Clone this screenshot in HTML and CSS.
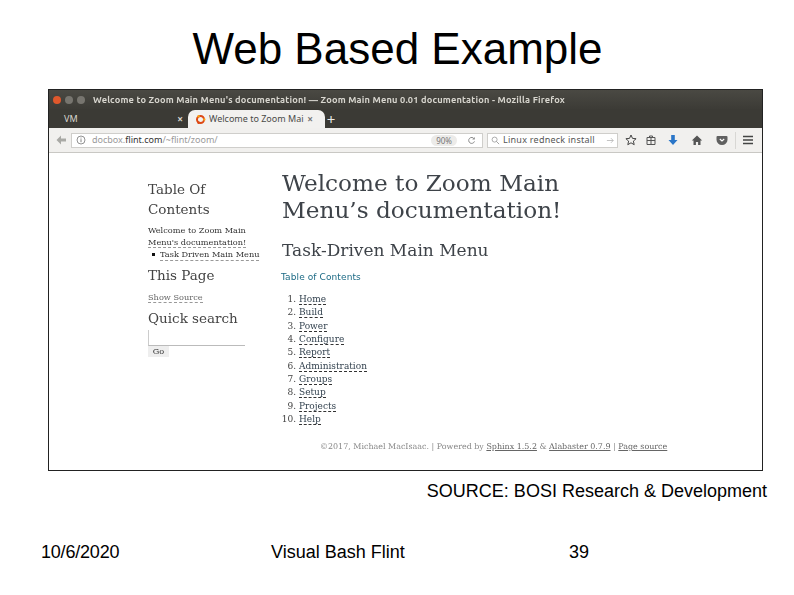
FILE: index.html
```html
<!DOCTYPE html>
<html lang="en">
<head>
<meta charset="utf-8">
<title>Web Based Example</title>
<link rel="stylesheet" href="styles.css">
</head>
<body>
<main class="slide">
  <h1 class="slide-title">Web Based Example</h1>
  <section class="shot">
    <div class="titlebar">
      <span class="dot dot-close"></span><span class="dot"></span><span class="dot"></span>
      <span class="win-title">Welcome to Zoom Main Menu's documentation! — Zoom Main Menu 0.01 documentation - Mozilla Firefox</span>
    </div>
    <div class="tabbar">
      <div class="tab-idle"><span>VM</span><span class="tab-x">×</span></div>
      <div class="tab-active">
        <svg class="favicon" viewBox="0 0 10 10"><circle cx="5" cy="5" r="3.2" fill="none" stroke="#dd4814" stroke-width="1.8"/><circle cx="8.4" cy="5" r="1.1" fill="#f7a11a"/><circle cx="3.2" cy="2" r="1.1" fill="#f7a11a"/><circle cx="3.2" cy="8" r="1.1" fill="#dd4814"/></svg>
        <span class="tab-label">Welcome to Zoom Mai</span><span class="tab-x tab-x-dark">×</span>
      </div>
      <span class="tab-new">+</span>
    </div>
    <div class="toolbar">
      <svg class="back" viewBox="0 0 12 12"><path d="M6 1.500 1.500 6 6 10.500V7.600h5V4.400H6z" fill="#a9a9a5"/></svg>
      <div class="urlbar">
        <svg class="info" viewBox="0 0 10 10"><circle cx="5" cy="5" r="4" fill="none" stroke="#777" stroke-width=".8"/><path d="M5 4.200v3M5 2.600v.9" stroke="#777" stroke-width=".9"/></svg>
        <span class="url"><span class="url-dim">docbox.</span><b>flint.com</b><span class="url-dim">/~flint/zoom/</span></span>
        <span class="zoom-pill">90%</span>
        <svg class="reload" viewBox="0 0 10 10"><path d="M8 3.200A3.300 3.300 0 1 0 8.300 6" fill="none" stroke="#8a8a8a" stroke-width="1.100"/><path d="M8.600 1v3H5.800z" fill="#8a8a8a"/></svg>
      </div>
      <div class="searchbar">
        <svg class="lens" viewBox="0 0 10 10"><circle cx="4" cy="4" r="2.800" fill="none" stroke="#999" stroke-width=".9"/><path d="m6 6 3 3" stroke="#999" stroke-width="1"/></svg>
        <span class="search-text">Linux redneck install</span>
        <svg class="go" viewBox="0 0 10 10"><path d="M1 5h7M5.500 2.400 8 5 5.500 7.600" fill="none" stroke="#b5b5b5" stroke-width=".9"/></svg>
      </div>
      <div class="tools">
        <svg class="tool-star" viewBox="0 0 12 12"><path d="m6 1 1.500 3.400 3.600.3-2.700 2.400.8 3.600L6 8.800l-3.200 1.900.8-3.600L.9 4.700l3.600-.3z" fill="none" stroke="#444" stroke-width="1"/></svg>
        <svg class="tool-box" viewBox="0 0 12 12"><path d="M2 3.500h8v7H2zM2 6.500h8M6 3.500v7M4.500 3.500V2h3v1.500" fill="none" stroke="#555" stroke-width="1"/></svg>
        <svg class="tool-down" viewBox="0 0 12 12"><path d="M4.200 1h3.600v5h2.700L6 11 1.500 6h2.700z" fill="#2a76c8"/></svg>
        <svg class="tool-home" viewBox="0 0 12 12"><path d="M6 1.500.8 6.500h1.700V11h2.400V8h2.200v3h2.400V6.500h1.700z" fill="#555"/></svg>
        <svg class="tool-pocket" viewBox="0 0 12 12"><path d="M1.500 2h9a1 1 0 0 1 1 1v2.800a5.500 5.200 0 0 1-11 0V3a1 1 0 0 1 1-1z" fill="#606060"/><path d="M3.800 5 6 7l2.200-2" fill="none" stroke="#fff" stroke-width="1.100"/></svg>
        <span class="tool-sep"></span>
        <svg viewBox="0 0 12 12"><path d="M1 2.500h10M1 6h10M1 9.500h10" stroke="#444" stroke-width="1.700"/></svg>
      </div>
    </div>
    <div class="page">
      <div class="doc">
        <aside class="sidebar">
          <h3 class="side-head side-toc">Table Of Contents</h3>
          <div class="side-first">Welcome to Zoom Main <a class="side-link">Menu's documentation!</a></div>
          <div class="side-sub"><span class="bullet"></span><a class="side-link">Task Driven Main Menu</a></div>
          <h3 class="side-head side-page">This Page</h3>
          <a class="side-link side-src">Show Source</a>
          <h3 class="side-head side-quick">Quick search</h3>
          <div class="search-input"></div>
          <span class="search-go">Go</span>
        </aside>
        <article class="body-col">
          <h1 class="doc-h1">Welcome to Zoom Main Menu’s documentation!</h1>
          <h2 class="doc-h2">Task-Driven Main Menu</h2>
          <p class="toc-label">Table of Contents</p>
          <ol class="toc">
            <li><a>Home</a></li>
            <li><a>Build</a></li>
            <li><a>Power</a></li>
            <li><a>Configure</a></li>
            <li><a>Report</a></li>
            <li><a>Administration</a></li>
            <li><a>Groups</a></li>
            <li><a>Setup</a></li>
            <li><a>Projects</a></li>
            <li><a>Help</a></li>
          </ol>
        </article>
      </div>
      <p class="doc-foot">©2017, Michael MacIsaac. | Powered by <u>Sphinx 1.5.2</u> &amp; <u>Alabaster 0.7.9</u> | <u>Page source</u></p>
    </div>
  </section>
  <p class="source">SOURCE: BOSI Research &amp; Development</p>
  <footer class="slide-foot">
    <span class="foot-date">10/6/2020</span>
    <span class="foot-mid">Visual Bash Flint</span>
    <span>39</span>
  </footer>
</main>
</body>
</html>
```
FILE: styles.css
```css
* { box-sizing: border-box; }
html, body { margin: 0; padding: 0; background: #fff; }
body { width: 794px; height: 595px; overflow: hidden; font-family: "Liberation Sans", Arial, sans-serif; color: #000; }
.slide { width: 794px; height: 595px; padding-top: 23px; }
.slide-title { margin: 0 0 0 1px; font-size: 44px; line-height: 52px; font-weight: 400; text-align: center; height: 66px; }

.shot { width: 715px; height: 382px; margin-left: 48px; border: 1px solid #222; display: flex; flex-direction: column; overflow: hidden; background: #fff; }
.titlebar { height: 19px; background: linear-gradient(#4a4943, #3c3b36); display: flex; align-items: center; padding-left: 4px; gap: 4px; color: #d8d6cf; }
.dot { width: 8px; height: 8px; border-radius: 50%; background: #77756f; }
.dot-close { background: #e0582c; }
.win-title { margin-left: 4px; font: 700 9.250px/12px "Ubuntu", "Noto Sans", sans-serif; white-space: nowrap; letter-spacing: .18px; filter: blur(.3px); }

.tabbar { height: 19px; background: #3b3a35; display: flex; align-items: flex-end; color: #d8d6cf; font: 400 9px/12px "Noto Sans", sans-serif; }
.tab-idle { width: 139px; height: 19px; display: flex; justify-content: space-between; align-items: center; padding: 0 5px 0 15px; }
.tab-x { font-size: 10px; font-weight: 700; }
.tab-active { width: 137px; height: 18px; background: #f2f1ef; border-radius: 7px 7px 0 0; color: #4a4a48; display: flex; align-items: center; padding: 0 12px 0 7px; }
.favicon { width: 11px; height: 11px; flex: none; margin-right: 3px; }
.tab-label { flex: 1; overflow: hidden; white-space: nowrap; font-size: 9px; }
.tab-x-dark { color: #777; }
.tab-new { margin: 0 0 0 -2px; font-size: 15px; line-height: 18px; color: #e8e8e4; width: 16px; text-align: center; }

.toolbar { height: 25px; background: #f1f0ee; border-bottom: 1px solid #c9c8c4; display: flex; align-items: center; padding: 0 8px 0 6px; }
.back { width: 12px; height: 12px; flex: none; margin-right: 4px; }
.urlbar { flex: none; width: 412px; height: 15px; background: #fff; border: 1px solid #cfcecb; display: flex; align-items: center; padding: 0 5px 0 4px; font: 400 9px/12px "Noto Sans", sans-serif; }
.info { width: 10px; height: 10px; flex: none; margin-right: 6px; }
.url { flex: 1; white-space: nowrap; color: #333; }
.url-dim { color: #999; }
.url b { font-weight: 400; }
.zoom-pill { background: #ecebe9; border-radius: 7px; padding: 0 5px; font-size: 8px; line-height: 11px; color: #777; margin-right: 10px; }
.reload { width: 9px; height: 9px; flex: none; margin-right: 1px; }
.searchbar { flex: none; width: 131px; height: 15px; margin-left: 4px; background: #fff; border: 1px solid #cfcecb; display: flex; align-items: center; padding: 0 2px 0 3px; font: 400 9px/12px "Noto Sans", sans-serif; color: #555; }
.lens { width: 9px; height: 9px; flex: none; margin-right: 3px; }
.search-text { flex: 1; white-space: nowrap; letter-spacing: .25px; }
.go { width: 9px; height: 9px; flex: none; }
.tools { flex: none; display: flex; align-items: center; margin-left: 7px; }
.tools svg { width: 12px; height: 12px; flex: none; }
.tools .tool-star { margin-right: 8px; }
.tools .tool-box { margin-right: 10px; }
.tools .tool-down { margin-right: 12px; }
.tools .tool-home { margin-right: 13px; }
.tools .tool-pocket { margin-right: 7px; }
.tool-sep { width: 1px; height: 17px; background: #d8d7d4; margin-right: 6px; }

.page { flex: 1; display: flex; flex-direction: column; filter: blur(.25px); }
.doc { display: flex; height: 288px; padding: 0 0 0 99px; }
.sidebar { width: 134px; padding-top: 26px; font-family: "DejaVu Serif", serif; color: #444; }
.side-head { margin: 0; font-size: 13.500px; font-weight: 400; line-height: 20px; color: #444; width: 100px; }
.side-link { font-size: 8.200px; line-height: 12px; color: #333; border-bottom: 1px dashed #999; }
.side-first { width: 104px; margin-top: 5px; font-size: 8.200px; line-height: 12px; color: #333; }
.side-sub { display: flex; align-items: center; height: 12px; white-space: nowrap; font-size: 8.200px; padding-left: 4px; }
.bullet { width: 3px; height: 3px; background: #111; margin-right: 5px; }
.side-page { margin-top: 5px; }
.side-src { display: inline-block; margin-top: 5px; line-height: 10px; color: #666; }
.side-quick { margin-top: 4px; }
.search-input { width: 97px; height: 16px; margin-top: 2px; border-left: 1px solid #ccc; border-bottom: 1px solid #bbb; }
.search-go { display: block; width: 21px; height: 11px; background: #eee; font-size: 8.200px; line-height: 11px; text-align: center; color: #333; }

.body-col { flex: 1; padding-top: 16px; font-family: "DejaVu Serif", serif; color: #3e4349; }
.doc-h1 { margin: 0; width: 300px; font-size: 23.200px; line-height: 27px; font-weight: 400; color: #3e4349; }
.doc-h2 { margin: 17px 0 0; font-size: 17px; line-height: 20px; font-weight: 400; color: #3e4349; }
.toc-label { margin: 11px 0 0 -1px; font: 400 9px/12px "DejaVu Sans", sans-serif; color: #1c6a85; letter-spacing: .1px; }
.toc { margin: 10px 0 0; padding: 0 0 0 17px; font-size: 9px; line-height: 13.350px; color: #444; }
.toc a { color: #33424f; border-bottom: 1px dashed #333; }

.doc-foot { margin: 0; padding-left: 271px; font: 400 7.960px/12px "DejaVu Serif", serif; color: #888; white-space: nowrap; }
.doc-foot u { color: #666; }

.source { margin: 10px 0 0; padding-right: 27px; text-align: right; font-size: 18px; line-height: 20px; }
.slide-foot { display: flex; margin-top: 41px; padding-left: 41px; font-size: 18px; line-height: 20px; }
.foot-date { width: 230px; letter-spacing: -.2px; }
.foot-mid { width: 298px; }
```
